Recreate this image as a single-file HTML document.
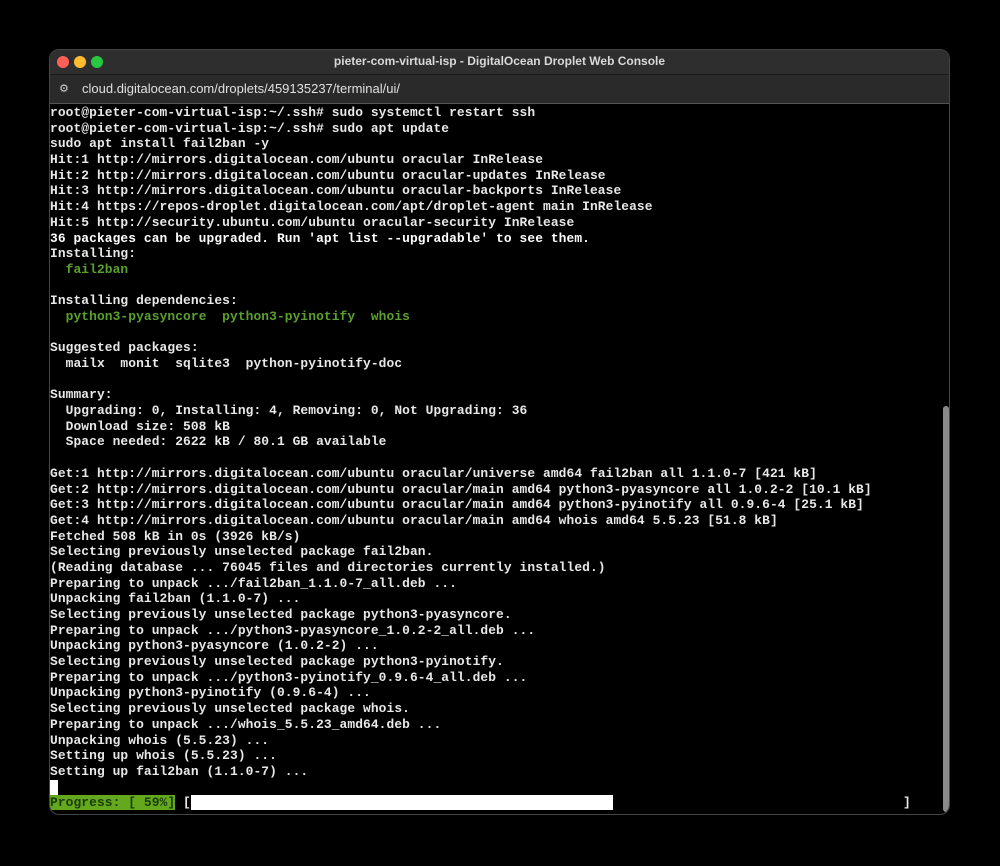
<!DOCTYPE html>
<html><head><meta charset="utf-8"><style>
html,body{margin:0;padding:0;background:#000;width:1000px;height:866px;overflow:hidden}
.win{position:absolute;left:49px;top:49px;width:901px;height:766px;border-radius:10px;background:#000;border:1px solid #444;box-sizing:border-box;overflow:hidden}
.title{position:absolute;left:0;top:0;right:0;height:24px;background:#2e2e2e;border-bottom:1px solid #1a1a1a;color:#d8d8d8;font:bold 12px "Liberation Sans",sans-serif;text-align:center;line-height:23px}
.dot{position:absolute;top:6px;width:12px;height:12px;border-radius:50%}
.addr{position:absolute;left:0;top:25px;right:0;height:28px;background:#2a2a2a;border-bottom:1px solid #555;color:#e0e0e0;font:13px "Liberation Sans",sans-serif;line-height:28px}
.term{position:absolute;left:0;top:55px;font-family:"Liberation Mono",monospace;font-size:12.9px;letter-spacing:0.09px;line-height:15.68px;color:#e8e8e8;white-space:pre;font-weight:bold}
.g{color:#5aa02c}
.b{color:#fff}
.sb{position:absolute;left:893px;top:356px;width:6px;height:406px;background:#8a8a8a;border-radius:3px}
</style></head><body>
<div class="win">
<div class="title">pieter-com-virtual-isp - DigitalOcean Droplet Web Console
<div class="dot" style="left:7px;background:#fe5f57"></div>
<div class="dot" style="left:24px;background:#febc2e"></div>
<div class="dot" style="left:41px;background:#28c840"></div>
</div>
<div class="addr"><span style="position:absolute;left:9px;top:0;font-size:11px;color:#ccc">⚙</span><span style="position:absolute;left:32px">cloud.digitalocean.com/droplets/459135237/terminal/ui/</span></div>
<div class="term">root@pieter-com-virtual-isp:~/.ssh# sudo systemctl restart ssh
root@pieter-com-virtual-isp:~/.ssh# sudo apt update
sudo apt install fail2ban -y
Hit:1 http://mirrors.digitalocean.com/ubuntu oracular InRelease
Hit:2 http://mirrors.digitalocean.com/ubuntu oracular-updates InRelease
Hit:3 http://mirrors.digitalocean.com/ubuntu oracular-backports InRelease
Hit:4 https://repos-droplet.digitalocean.com/apt/droplet-agent main InRelease
Hit:5 http://security.ubuntu.com/ubuntu oracular-security InRelease
<span class="b">36 packages can be upgraded. Run 'apt list --upgradable' to see them.</span>
Installing:
  <span class="g">fail2ban</span>

Installing dependencies:
  <span class="g">python3-pyasyncore  python3-pyinotify  whois</span>

Suggested packages:
  mailx  monit  sqlite3  python-pyinotify-doc

Summary:
  Upgrading: 0, Installing: 4, Removing: 0, Not Upgrading: 36
  Download size: 508 kB
  Space needed: 2622 kB / 80.1 GB available

Get:1 http://mirrors.digitalocean.com/ubuntu oracular/universe amd64 fail2ban all 1.1.0-7 [421 kB]
Get:2 http://mirrors.digitalocean.com/ubuntu oracular/main amd64 python3-pyasyncore all 1.0.2-2 [10.1 kB]
Get:3 http://mirrors.digitalocean.com/ubuntu oracular/main amd64 python3-pyinotify all 0.9.6-4 [25.1 kB]
Get:4 http://mirrors.digitalocean.com/ubuntu oracular/main amd64 whois amd64 5.5.23 [51.8 kB]
Fetched 508 kB in 0s (3926 kB/s)
Selecting previously unselected package fail2ban.
(Reading database ... 76045 files and directories currently installed.)
Preparing to unpack .../fail2ban_1.1.0-7_all.deb ...
Unpacking fail2ban (1.1.0-7) ...
Selecting previously unselected package python3-pyasyncore.
Preparing to unpack .../python3-pyasyncore_1.0.2-2_all.deb ...
Unpacking python3-pyasyncore (1.0.2-2) ...
Selecting previously unselected package python3-pyinotify.
Preparing to unpack .../python3-pyinotify_0.9.6-4_all.deb ...
Unpacking python3-pyinotify (0.9.6-4) ...
Selecting previously unselected package whois.
Preparing to unpack .../whois_5.5.23_amd64.deb ...
Unpacking whois (5.5.23) ...
Setting up whois (5.5.23) ...
Setting up fail2ban (1.1.0-7) ...
<span style="background:#fff;color:#fff">_</span>
<span style="background:#64a81e;color:#1a3a08">Progress: [ 59%]</span> [<span style="background:#fff;color:#fff">                                                      </span>                                     ]</div>
<div class="sb"></div>
</div>
</body></html>
